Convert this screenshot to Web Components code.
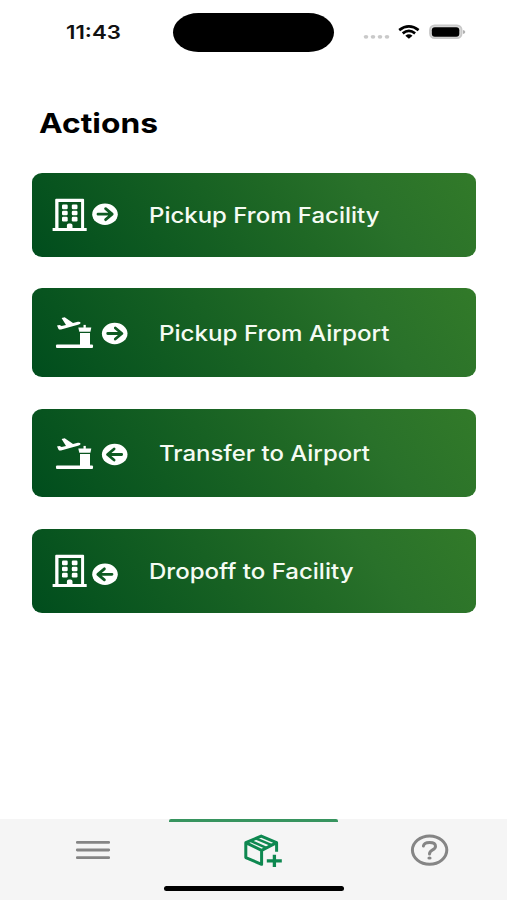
<!DOCTYPE html>
<html lang="en">
<head>
<meta charset="utf-8">
<title>Actions</title>
<style>
body{margin:0;background:#fff;font-family:Inter,"Liberation Sans",sans-serif;color:#000}
</style>
</head>
<body>
<app-screen></app-screen>
<script>
const define=(name,html,init)=>customElements.define(name,class extends HTMLElement{
  connectedCallback(){
    if(this.shadowRoot)return;
    this.attachShadow({mode:'open'}).innerHTML=html;
    if(init)init(this,this.shadowRoot);
  }
});

/* Text widened horizontally to a given width */
define('wide-text',`<style>
:host{display:block;white-space:nowrap;line-height:1}
span{display:inline-block;transform-origin:0 50%}
</style><span><slot></slot></span>`,(el,root)=>{
  const s=root.querySelector('span');
  const w=s.offsetWidth?s.getBoundingClientRect().width:0;
  if(w)s.style.transform=`scaleX(${el.getAttribute('width')/w})`;
  el.style.width=el.getAttribute('width')+'px';
});

define('status-bar',`<style>
:host{display:flex;height:64px;box-sizing:border-box;padding-left:66px}
wide-text{font-size:18.5px;font-weight:600;margin-top:23px;color:#111}
.island{width:161px;height:39px;border-radius:26px/20px;background:#000;margin:13px 0 0 52px}
svg{margin-left:26px}
</style>
<wide-text width="55">11:43</wide-text><div class="island"></div>
<svg width="110" height="64" viewBox="360 0 110 64">
<g fill="#c9c9c9"><ellipse cx="366" cy="36.8" rx="2.3" ry="1.9"/><ellipse cx="373" cy="36.8" rx="2.3" ry="1.9"/><ellipse cx="380" cy="36.8" rx="2.3" ry="1.9"/><ellipse cx="387" cy="36.8" rx="2.3" ry="1.9"/></g>
<g fill="none" stroke="#000" stroke-width="2.7"><path d="M399.2 30.1Q408.9 22.7 418.6 30.1"/><path d="M402.7 33.4Q408.9 28.5 415.1 33.4"/></g>
<path d="M405.3 35.7Q408.9 33 412.5 35.7L408.9 38.7Z"/>
<rect x="430" y="25.4" width="31.6" height="12.8" rx="4.6" fill="#ddd" stroke="#c8c8c8" stroke-width="1.8"/>
<rect x="431.8" y="27.2" width="27.5" height="9.6" rx="3"/><path d="M463 29.9q2.3 .5 2.3 2t-2.3 2z" fill="#b0b0b0"/>
</svg>`);

const building=`<path fill-rule="evenodd" fill="#fff" d="M24.2 25.8h26.9q1 0 1 1v28.2h2.6v3H20.6v-3h2.6v-28.2q0-1 1-1zM26.5 29v26H34.9v-2.7q0-1.8 2-1.8h1.6q2 0 2 1.8V55H49.1V29z"/>
<g fill="#fff"><rect x="30" y="31.6" width="5.7" height="4.6" rx="1.2"/><rect x="39.8" y="31.6" width="5.7" height="4.6" rx="1.2"/><rect x="30" y="37.7" width="5.7" height="4.6" rx="1.2"/><rect x="39.8" y="37.7" width="5.7" height="4.6" rx="1.2"/><rect x="30" y="43.8" width="5.7" height="4.6" rx="1.2"/><rect x="39.8" y="43.8" width="5.7" height="4.6" rx="1.2"/></g>`;
const airport=`<g fill="#fff"><rect x="24" y="56.5" width="37" height="3.4" rx="1"/><rect x="48" y="45" width="10" height="13"/><path d="M46.3 39.5H59.3L58.4 43.8H47.3Z"/><rect x="51.5" y="36.9" width="2.3" height="3"/>
<path d="M25 37.6L27.6 37L29.6 38.1L34 36.9L29.6 29.9L32.7 29.3L41 34.9L45.9 33.8Q48.3 33.6 48.6 34.7Q48.6 36 46.8 36.5L29 41.5Q27.3 41.9 26.6 40.9Z"/></g>`;
const arrow=(x,y,dir)=>`<ellipse cx="${x}" cy="${y}" rx="12.8" ry="10.7" fill="#fff"/><g transform="translate(${x} ${y}) scale(${dir} 1)" fill="none" stroke="#0f5a22" stroke-width="2.8" stroke-linecap="round" stroke-linejoin="round"><path d="M-7 0H6.3M0.6 -5.5L7.2 0L0.6 5.5"/></g>`;

define('action-card',`<style>
:host{display:flex;align-items:flex-start;box-sizing:border-box;width:444px;border-radius:10px/9px;background:linear-gradient(54deg,#004d1d 0%,#1f6825 57%,#29712a 75%,#327a29 100%);color:#f5fbf3;overflow:hidden}
svg{flex:none}wide-text{font-size:21.3px;font-weight:500}
</style><svg width="100" height="84"></svg><wide-text><slot></slot></wide-text>`,(el,root)=>{
  const air=el.getAttribute('place')==='airport',dir=el.getAttribute('direction')==='out'?1:-1;
  root.querySelector('svg').innerHTML=(air?airport:building)+arrow(air?82.7:73,air?45.5:(dir>0?41.2:45.3),dir);
  el.style.height=air?'88.5px':'84.3px';
});

define('bottom-nav',`<style>
:host{display:grid;grid-template-columns:repeat(3,169px);height:81.5px;background:#f5f5f5;position:relative}
.tab{height:54px;box-sizing:border-box}
.active{border-top:3px solid #37945f;border-radius:2px}
.active svg{margin-top:-3px}
.home{position:absolute;left:164px;top:67.2px;width:180px;height:5.6px;border-radius:3px;background:#000}
svg{display:block}
</style>
<div class="tab"><svg width="169" height="54" viewBox="0 818.5 169 54"><path d="M77.3 841.9H108.7M77.3 849.5H108.7M77.3 857.2H108.7" stroke="#858585" stroke-width="2.8" stroke-linecap="round"/></svg></div>
<div class="tab active"><svg width="169" height="54" viewBox="169 818.5 169 54"><g fill="none" stroke="#0e8850" stroke-width="3" stroke-linejoin="round"><path d="M276.6 851.2V842.2L261.2 835.6L245.8 842.2V857.1L261.6 863.8V849.9M245.8 842.2L261.6 849.9L276.6 842.2"/><path stroke-width="2.5" d="M250.6 840.4L266.3 847.4M256.3 838.1L271.8 844.6"/><path stroke-width="3.3" d="M266.8 860.4H281.8M274.4 854.2V866.6"/></g></svg></div>
<div class="tab"><svg width="169" height="54" viewBox="338 818.5 169 54"><g fill="none" stroke="#858585" stroke-width="3"><ellipse cx="429.6" cy="849.6" rx="17.2" ry="14.2"/><path d="M423.4 845.6Q424 841.9 429.6 841.9Q435.5 841.9 435.5 845.8Q435.5 847.9 432.6 849.4Q429.5 851.1 429.5 853.6" stroke-linecap="round"/></g><ellipse cx="429.5" cy="857.5" rx="2.1" ry="1.6" fill="#858585"/></svg></div>
<div class="home"></div>`);

define('app-screen',`<style>
:host{display:flex;flex-direction:column;width:507px;height:900px;overflow:hidden}
main{flex:1;padding:45.5px 0 0 31.7px}
.title{font-size:27.5px;font-weight:700;margin-left:7.3px}
.list{display:flex;flex-direction:column;margin-top:35.6px;gap:31.6px}
</style>
<status-bar></status-bar>
<main><wide-text class="title" width="119">Actions</wide-text>
<div class="list">
<action-card place="facility" direction="out" data-x="117.3" data-w="230.5">Pickup From Facility</action-card>
<action-card place="airport" direction="out" data-x="127.1" data-w="230.5">Pickup From Airport</action-card>
<action-card place="airport" direction="in" data-x="127.1" data-w="211">Transfer to Airport</action-card>
<action-card place="facility" direction="in" data-x="117.3" data-w="204.5">Dropoff to Facility</action-card>
</div></main>
<bottom-nav></bottom-nav>`,(el,root)=>{
  for(const c of root.querySelectorAll('action-card')){
    const t=c.shadowRoot.querySelector('wide-text'),s=t.shadowRoot.querySelector('span');
    s.style.transform='none';
    s.style.transform=`scaleX(${c.dataset.w/s.getBoundingClientRect().width})`;
    t.style.width=c.dataset.w+'px';
    t.style.marginLeft=(c.dataset.x-100)+'px';
    t.style.marginTop=c.getAttribute('place')==='airport'?'34.5px':'32.4px';
  }
});
</script>
</body>
</html>
